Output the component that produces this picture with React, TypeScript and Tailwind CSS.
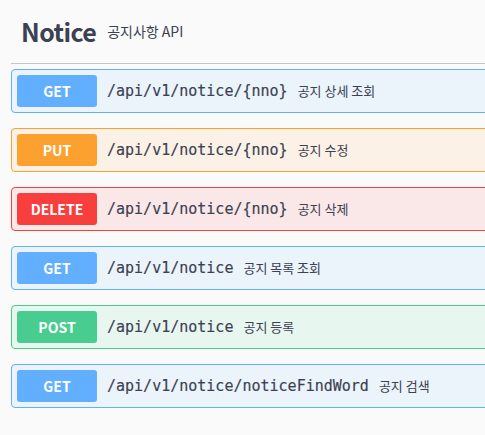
import React from "react";

type Op = { method: string; path: string; desc: string };

const ops: Op[] = [
  { method: "GET", path: "/api/v1/notice/{nno}", desc: "공지 상세 조회" },
  { method: "PUT", path: "/api/v1/notice/{nno}", desc: "공지 수정" },
  { method: "DELETE", path: "/api/v1/notice/{nno}", desc: "공지 삭제" },
  { method: "GET", path: "/api/v1/notice", desc: "공지 목록 조회" },
  { method: "POST", path: "/api/v1/notice", desc: "공지 등록" },
  { method: "GET", path: "/api/v1/notice/noticeFindWord", desc: "공지 검색" },
];

const styles: Record<string, { row: string; badge: string }> = {
  GET: { row: "bg-[#ebf3fb] border-[#61affe]", badge: "bg-[#61affe]" },
  PUT: { row: "bg-[#fbf1e6] border-[#fca130]", badge: "bg-[#fca130]" },
  DELETE: { row: "bg-[#fae7e7] border-[#f93e3e]", badge: "bg-[#f93e3e]" },
  POST: { row: "bg-[#e8f6f0] border-[#49cc90]", badge: "bg-[#49cc90]" },
};

const kr = { fontFamily: "'Noto Sans CJK KR', 'Noto Sans', sans-serif" };

export default function App() {
  return (
    <div
      className="w-[485px] h-[435px] overflow-hidden bg-[#fafafa] text-[#3b4151]"
      style={kr}
    >
      <div className="w-[560px] pl-[11px]">
        <div className="h-[64px] flex items-center pl-[10px] pb-[1px] border-b border-[#c4c6cb] mb-[5px]">
          <span className="text-[25px] font-bold leading-none tracking-[-0.6px]">Notice</span>
          <span className="ml-[11px] text-[14px] leading-none">공지사항 API</span>
        </div>
        {ops.map((op, i) => {
          const s = styles[op.method];
          return (
            <div
              key={i}
              className={`flex items-center p-[5px] border rounded-[4px] mb-[15px] ${s.row}`}
            >
              <div
                className={`w-[80px] h-[32px] rounded-[3px] flex items-center justify-center text-white text-[14px] font-bold ${s.badge}`}
              >
                {op.method}
              </div>
              <span
                className="ml-[10px] text-[15px] font-normal text-[#3b4151] [-webkit-text-stroke:0.15px_#3b4151]"
                style={{ fontFamily: "'DejaVu Sans Mono', monospace" }}
              >
                {op.path}
              </span>
              <span className="ml-[10px] text-[13px] text-[#3b4151]">{op.desc}</span>
            </div>
          );
        })}
      </div>
    </div>
  );
}
